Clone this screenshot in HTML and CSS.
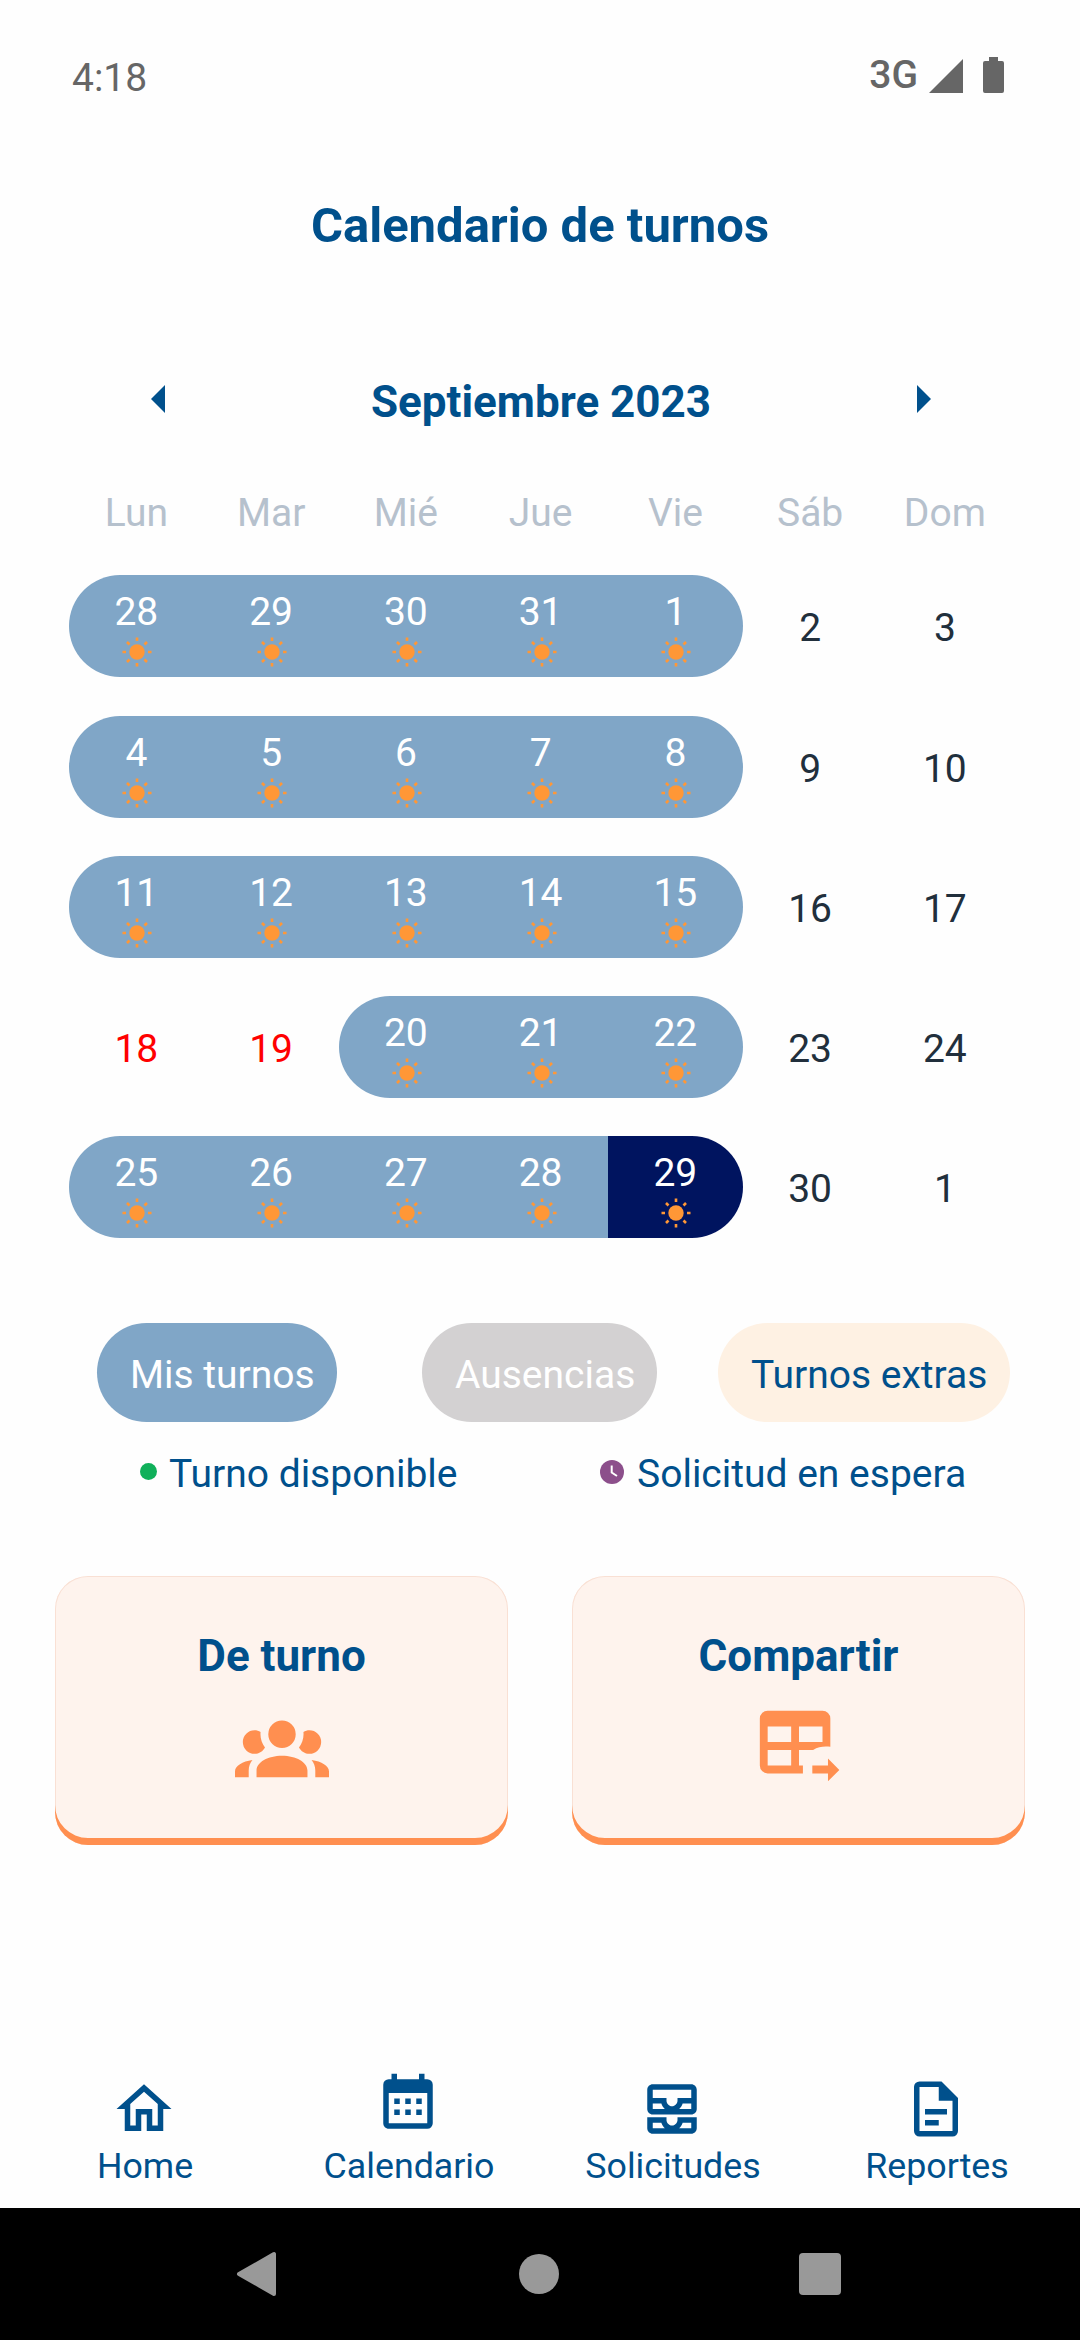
FILE: index.html
```
<!DOCTYPE html>
<html lang="es">
    <head>
        <meta charset="utf-8">
        <meta name="viewport" content="width=device-width, initial-scale=1.0">
        <title>Calendario de turnos</title>
        <link rel="stylesheet" href="styles.css">
    </head>
    <body>
        <div class="statusbar">
            <span class="time">4:18</span>
            <span class="network">3G</span>
            <svg class="signal" viewBox="0 0 34 34"><path d="M34 0V34H0Z"/></svg>
            <svg class="battery" viewBox="0 0 21 36"><path d="M6 0H15V4H19A2 2 0 0 1 21 6V34A2 2 0 0 1 19 36H2A2 2 0 0 1 0 34V6A2 2 0 0 1 2 4H6Z"/></svg>
        </div>

        <h1>Calendario de turnos</h1>

        <div class="month">
            <svg class="arrow" viewBox="0 0 14 28"><path d="M14 0V28L0 14Z"/></svg>
            <h2>Septiembre 2023</h2>
            <svg class="arrow" viewBox="0 0 14 28"><path d="M0 0V28L14 14Z"/></svg>
        </div>

        <div class="weekdays">
            <span>Lun</span><span>Mar</span><span>Mié</span><span>Jue</span><span>Vie</span><span>Sáb</span><span>Dom</span>
        </div>

        <div class="weeks" id="weeks"></div>

        <div class="legend">
            <span class="pill mine">Mis turnos</span>
            <span class="pill absent">Ausencias</span>
            <span class="pill extra">Turnos extras</span>
        </div>
        <div class="legend2">
            <span class="dot"></span>
            <span class="available">Turno disponible</span>
            <svg class="clock" viewBox="0 0 24 24"><circle cx="12" cy="12" r="12" fill="#8c4f8b"/><path d="M11.7 5.5V12.5L17 16" fill="none" stroke="#fff" stroke-width="2"/></svg>
            <span>Solicitud en espera</span>
        </div>

        <div class="cards">
            <div class="card">
                <h2>De turno</h2>
                <svg viewBox="0 0 24 24"><path d="M12,5.5A3.5,3.5 0 0,1 15.5,9A3.5,3.5 0 0,1 12,12.5A3.5,3.5 0 0,1 8.5,9A3.5,3.5 0 0,1 12,5.5M5,8C5.56,8 6.08,8.15 6.53,8.42C6.38,9.85 6.8,11.27 7.66,12.38C7.16,13.34 6.16,14 5,14A3,3 0 0,1 2,11A3,3 0 0,1 5,8M19,8A3,3 0 0,1 22,11A3,3 0 0,1 19,14C17.84,14 16.84,13.34 16.34,12.38C17.2,11.27 17.62,9.85 17.47,8.42C17.92,8.15 18.44,8 19,8M5.5,18.25C5.5,16.18 8.41,14.5 12,14.5C15.59,14.5 18.5,16.18 18.5,18.25V20H5.5V18.25M0,20V18.5C0,17.11 1.89,15.94 4.45,15.6C3.86,16.28 3.5,17.22 3.5,18.25V20H0M24,20H20.5V18.25C20.5,17.22 20.14,16.28 19.55,15.6C22.11,15.94 24,17.11 24,18.5V20Z"/></svg>
            </div>
            <div class="card">
                <h2>Compartir</h2>
                <svg viewBox="0 0 24 24"><path d="M4 3H18A2 2 0 0 1 20 5V12.18C18.5 12 17 12.1 15.6 13H12V17H13V19H4A2 2 0 0 1 2 17V5A2 2 0 0 1 4 3M4 7V11H10V7H4M12 7V11H18V7H12M4 13V17H10V13H4M15.4 17H19.4V15.2L22.3 18.1L19.4 21V19H15.4Z"/></svg>
            </div>
        </div>

        <div class="nav">
            <div class="tab">
                <svg viewBox="0 0 24 24"><path d="M12 5.69L17 10.19V18H15V12H9V18H7V10.19L12 5.69M12 3L2 12H5V20H11V14H13V20H19V12H22L12 3"/></svg>
                <span>Home</span>
            </div>
            <div class="tab active">
                <svg viewBox="0 0 24 24"><path d="M9,10V12H7V10H9M13,10V12H11V10H13M17,10V12H15V10H17M19,3A2,2 0 0,1 21,5V19A2,2 0 0,1 19,21H5C3.89,21 3,20.1 3,19V5A2,2 0 0,1 5,3H6V1H8V3H16V1H18V3H19M19,19V8H5V19H19M9,14V16H7V14H9M13,14V16H11V14H13M17,14V16H15V14H17Z"/></svg>
                <span>Calendario</span>
            </div>
            <div class="tab">
                <svg viewBox="0 0 24 24"><path d="M19 3H5c-1.1 0-2 .9-2 2v7c0 1.1.9 2 2 2h14c1.1 0 2-.9 2-2V5c0-1.1-.9-2-2-2zM5 10h3.13c.21.78.67 1.47 1.27 2H5v-2zm14 2h-4.4c.6-.53 1.06-1.22 1.27-2H19v2zm0-4h-5v1c0 1.07-.93 2-2 2s-2-.93-2-2V8H5V5h14v3zm-5 7v1c0 .47-.19.9-.48 1.25-.37.45-.92.75-1.52.75s-1.15-.3-1.52-.75c-.29-.35-.48-.78-.48-1.25v-1H3v4c0 1.1.9 2 2 2h14c1.1 0 2-.9 2-2v-4h-7zm-9 2h3.13c.02.09.06.17.09.25.24.68.65 1.28 1.18 1.75H5v-2zm14 2h-4.4c.54-.47.95-1.07 1.18-1.75.03-.08.07-.16.09-.25H19v2z"/></svg>
                <span>Solicitudes</span>
            </div>
            <div class="tab">
                <svg viewBox="0 0 24 24"><path d="M6,2A2,2 0 0,0 4,4V20A2,2 0 0,0 6,22H18A2,2 0 0,0 20,20V8L14,2H6M6,4H13V9H18V20H6V4M8,12V14H16V12H8M8,16V18H13V16H8Z"/></svg>
                <span>Reportes</span>
            </div>
        </div>

        <div class="system">
            <svg viewBox="0 0 44 46"><path d="M39 3V43L4 23Z" stroke="#999" stroke-width="4" stroke-linejoin="round"/></svg>
            <svg viewBox="0 0 44 46"><circle cx="22" cy="23" r="20"/></svg>
            <svg viewBox="0 0 44 46"><rect x="1" y="2" width="42" height="42" rx="4"/></svg>
        </div>

        <script>
            // s = turno, f = first of the block, l = last, t = today, r = holiday
            const weeks = [
                ["28 sf", "29 s", "30 s", "31 s", "1 sl", "2", "3"],
                ["4 sf", "5 s", "6 s", "7 s", "8 sl", "9", "10"],
                ["11 sf", "12 s", "13 s", "14 s", "15 sl", "16", "17"],
                ["18 r", "19 r", "20 sf", "21 s", "22 sl", "23", "24"],
                ["25 sf", "26 s", "27 s", "28 s", "29 slt", "30", "1"]
            ]
            const names = { s: "shift", f: "first", l: "last", t: "today", r: "holiday" }
            const sun = '<svg class="sun" viewBox="0 0 34 34"><circle cx="17" cy="17" r="7.7"/><path d="M17 2.5V6M17 28V31.5M2.5 17H6M28 17H31.5M7 7L9.5 9.5M24.5 24.5L27 27M7 27L9.5 24.5M24.5 9.5L27 7"/></svg>'

            for (const week of weeks) {
                const row = document.createElement("div")
                row.className = "week"
                for (const day of week) {
                    const [number, flags = ""] = day.split(" ")
                    const cell = document.createElement("div")
                    cell.className = ["day", ...[...flags].map(f => names[f])].join(" ")
                    cell.innerHTML = "<span>" + number + "</span>" + (flags.includes("s") ? sun : "")
                    row.appendChild(cell)
                }
                document.getElementById("weeks").appendChild(row)
            }
        </script>
    </body>
</html>
```

FILE: styles.css
```
* {
    box-sizing: border-box;
}

body {
    margin: 0;
    width: 1080px;
    height: 2340px;
    display: flex;
    flex-direction: column;
    background-color: #fefefe;
    color: #00508c;
    font-family: Roboto, sans-serif;
    font-size: 39px;
    line-height: 46px;
    overflow: hidden;
}

svg {
    display: block;
    flex-shrink: 0;
}

h1, h2 {
    margin: 0;
    font-weight: bold;
    text-align: center;
}

.statusbar {
    display: flex;
    align-items: center;
    height: 150px;
    padding: 0 76px 0 72px;
    color: #666;
    fill: #666;
}

.time {
    flex: 1;
    padding-top: 5px;
}

.network {
    font-size: 39px;
    font-weight: 500;
    margin-right: 11px;
}

.signal {
    width: 34px;
    height: 34px;
    margin: 2px 20px 0 0;
}

.battery {
    width: 21px;
    height: 36px;
}

h1 {
    height: 150px;
    font-size: 49px;
    line-height: 152px;
}

h2 {
    font-size: 44px;
    line-height: 52px;
}

.month {
    display: flex;
    justify-content: space-between;
    align-items: center;
    height: 84px;
    margin-top: 60px;
    padding: 0 149px 0 151px;
}

.arrow {
    width: 14px;
    height: 28px;
    margin-bottom: 6px;
    fill: #00508c;
}

.weekdays, .week {
    display: grid;
    grid-template-columns: repeat(7, 134.75px);
    margin-left: 69px;
    text-align: center;
}

.weekdays {
    margin-top: 46px;
    color: #b6c1cd;
}

.weeks {
    display: grid;
    gap: 38px;
    margin-top: 39px;
}

.week:first-child {
    padding-bottom: 1px;
}

.day {
    height: 102px;
    line-height: 107px;
    color: #212f3c;
}

.shift {
    display: flex;
    flex-direction: column;
    align-items: center;
    padding-top: 14px;
    line-height: 46px;
    background-color: #80a6c7;
    color: #fff;
}

.first {
    border-radius: 51px 0 0 51px;
}

.last {
    border-radius: 0 51px 51px 0;
}

.today {
    background-color: #00145f;
}

.holiday {
    color: #f00;
}

.sun {
    width: 34px;
    height: 34px;
    margin-left: 2px;
    fill: #ff9736;
    stroke: #ff9736;
}

.sun circle {
    stroke: none;
}

.sun path {
    stroke-width: 2.6;
}

.legend {
    display: flex;
    margin: 85px 0 0 97px;
}

.pill {
    height: 99px;
    padding: 29px 0 0 33px;
    border-radius: 50px;
    color: #fff;
}

.mine {
    width: 240px;
    background-color: #80a6c7;
}

.absent {
    width: 235px;
    margin-left: 85px;
    background-color: #d3d1d2;
}

.extra {
    width: 292px;
    margin-left: 61px;
    background-color: #fef1e3;
    color: #00508c;
}

.legend2 {
    display: flex;
    align-items: center;
    margin: 29px 0 0 140px;
}

.dot {
    width: 17px;
    height: 17px;
    margin: 0 12px 5px 0;
    border-radius: 50%;
    background-color: #10b05a;
}

.available {
    width: 431px;
}

.clock {
    width: 24px;
    height: 24px;
    margin: 0 13px 4px 0;
}

.cards {
    display: flex;
    justify-content: space-between;
    margin-top: 79px;
    padding: 0 55px;
}

.card {
    display: flex;
    flex-direction: column;
    align-items: center;
    width: 453px;
    height: 269px;
    padding-top: 54px;
    border-radius: 33px;
    background-color: #fef3ed;
    box-shadow: inset 0 -7px 0 #ff8f50, inset 0 0 0 1px #f9e0d4;
}

.card svg {
    width: 94px;
    height: 94px;
    margin-top: 17px;
    fill: #ff8f50;
}

.nav {
    display: flex;
    margin-top: auto;
    padding: 0 12px;
    font-size: 35.75px;
}

.tab {
    display: flex;
    flex-direction: column;
    align-items: center;
    width: 264px;
    height: 132px;
}

.tab svg {
    width: 66px;
    height: 66px;
    margin-bottom: 1px;
    fill: #00508c;
}

.tab span {
    padding-left: 2px;
}

.active svg {
    margin-top: -5px;
    margin-bottom: 6px;
}

.system {
    display: flex;
    justify-content: space-between;
    align-items: center;
    height: 132px;
    padding: 0 238px 0 235px;
    background-color: #000;
    fill: #999;
}

.system svg {
    width: 44px;
    height: 46px;
}
```
